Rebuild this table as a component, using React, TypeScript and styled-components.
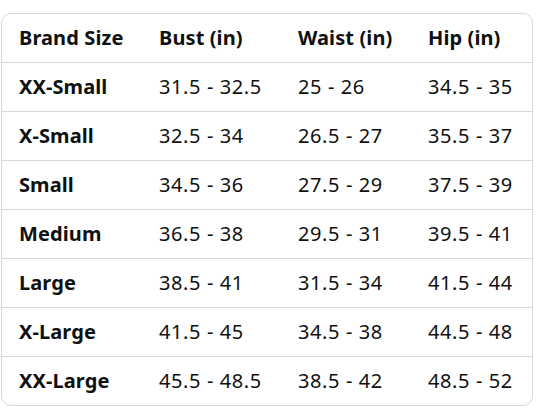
import React from "react";
import styled, { createGlobalStyle } from "styled-components";

const Global = createGlobalStyle`
  html, body { margin: 0; padding: 0; background: #ffffff; }
  body { font-family: "Noto Sans", "Open Sans", Arial, sans-serif; color: #0f1111; }
`;

const Page = styled.div`
  padding: 13px 16px 0 1px;
`;

const Table = styled.div`
  width: 532px;
  box-sizing: border-box;
  border: 1px solid #d5d9d9;
  border-radius: 10px;
  display: grid;
  grid-template-columns: 140px 139px 130px 121px;
  overflow: hidden;
`;

const Cell = styled.div<{ $head?: boolean; $last?: boolean }>`
  height: ${(p) => (p.$last ? "48px" : "49px")};
  box-sizing: border-box;
  padding-left: 17px;
  padding-bottom: 1px;
  display: flex;
  align-items: center;
  font-size: 20px;
  font-weight: ${(p) => (p.$head ? 700 : 400)};
  border-bottom: ${(p) => (p.$last ? "none" : "1px solid #d5d9d9")};
  white-space: nowrap;
  letter-spacing: ${(p) => (p.$head ? "0.1px" : "0.6px")};
`;

const headers = ["Brand Size", "Bust (in)", "Waist (in)", "Hip (in)"];
const rows = [
  ["XX-Small", "31.5 - 32.5", "25 - 26", "34.5 - 35"],
  ["X-Small", "32.5 - 34", "26.5 - 27", "35.5 - 37"],
  ["Small", "34.5 - 36", "27.5 - 29", "37.5 - 39"],
  ["Medium", "36.5 - 38", "29.5 - 31", "39.5 - 41"],
  ["Large", "38.5 - 41", "31.5 - 34", "41.5 - 44"],
  ["X-Large", "41.5 - 45", "34.5 - 38", "44.5 - 48"],
  ["XX-Large", "45.5 - 48.5", "38.5 - 42", "48.5 - 52"],
];

export default function App() {
  return (
    <>
      <Global />
      <Page>
        <Table>
          {headers.map((h) => (
            <Cell key={h} $head>
              {h}
            </Cell>
          ))}
          {rows.map((r, ri) =>
            r.map((c, ci) => (
              <Cell key={ri + "-" + ci} $head={ci === 0} $last={ri === rows.length - 1}>
                {c}
              </Cell>
            ))
          )}
        </Table>
      </Page>
    </>
  );
}
